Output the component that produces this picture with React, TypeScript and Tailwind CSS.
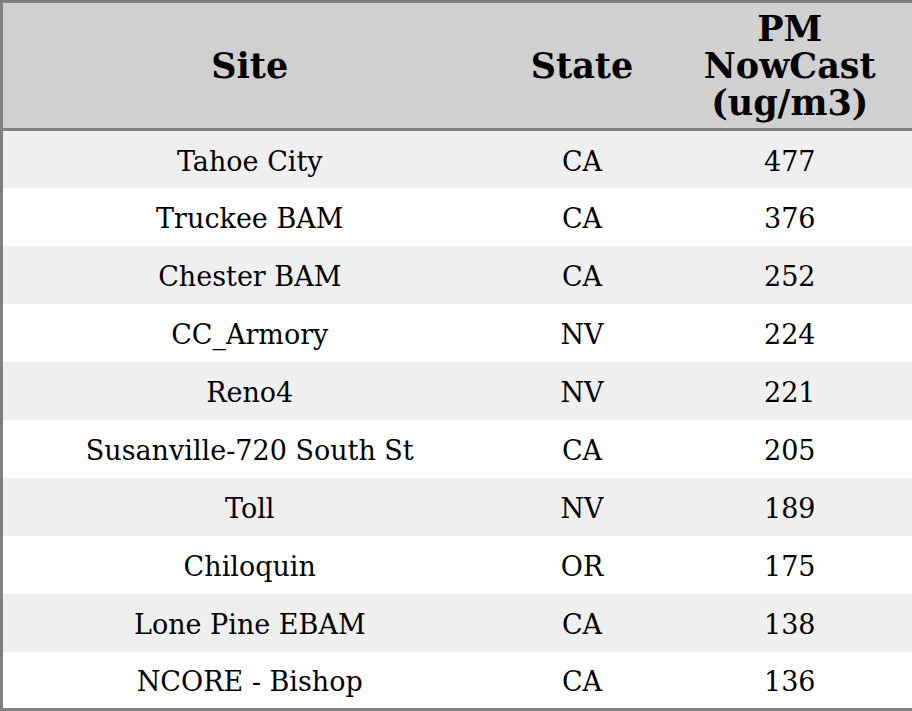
const rows: [string, string, number][] = [
  ["Tahoe City", "CA", 477],
  ["Truckee BAM", "CA", 376],
  ["Chester BAM", "CA", 252],
  ["CC_Armory", "NV", 224],
  ["Reno4", "NV", 221],
  ["Susanville-720 South St", "CA", 205],
  ["Toll", "NV", 189],
  ["Chiloquin", "OR", 175],
  ["Lone Pine EBAM", "CA", 138],
  ["NCORE - Bishop", "CA", 136],
];

export default function App() {
  return (
    <div className="w-[912px] h-[711px] bg-white font-['DejaVu_Serif',serif] text-black">
      <table className="w-[912px] table-fixed border-collapse border-[3px] border-[#808080]">
        <colgroup>
          <col className="w-[495px]" />
          <col className="w-[171px]" />
          <col className="w-[246px]" />
        </colgroup>
        <thead>
          <tr className="h-[128px] bg-[#d0d0d0] border-b-[3px] border-[#808080]">
            <th className="text-[35px] leading-[37px] font-bold text-center">Site</th>
            <th className="text-[35px] leading-[37px] font-bold text-center">State</th>
            <th className="text-[35px] leading-[37px] font-bold text-center">
              PM
              <br />
              NowCast
              <br />
              (ug/m3)
            </th>
          </tr>
        </thead>
        <tbody>
          {rows.map(([site, state, pm], i) => (
            <tr key={site} className={i % 2 === 0 ? "h-[58px] bg-[#efefef]" : "h-[58px] bg-white"}>
              <td className="text-[27px] text-center p-0 pt-[5px]">{site}</td>
              <td className="text-[27px] text-center p-0 pt-[5px]">{state}</td>
              <td className="text-[27px] text-center p-0 pt-[5px]">{pm}</td>
            </tr>
          ))}
        </tbody>
      </table>
    </div>
  );
}
